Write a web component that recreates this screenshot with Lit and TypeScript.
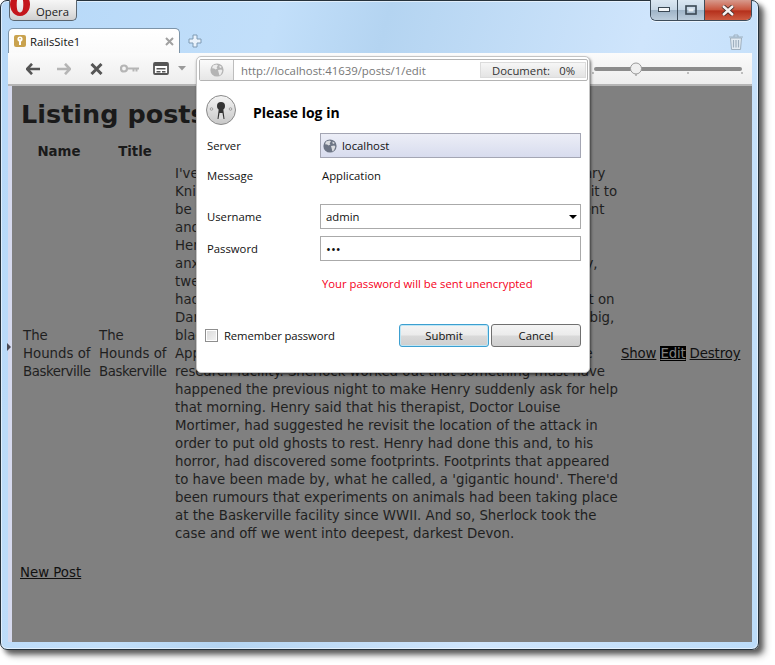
import { LitElement, html, css } from "lit";
import { customElement } from "lit/decorators.js";

const lines = [
  "I've had an odd day. A man named Henry came to see us, Henry",
  "Knight, who had seen something terrible and actually wanted it to",
  "be the one who should explain it all. He was an ordinary, decent",
  "and polite young man, although clearly very worried indeed.",
  "Henry had come all the way from Devon to see us in London",
  "anxious and so afraid of what he had seen on that moor, sadly,",
  "twenty years ago, something that had left him very shaken.",
  "had been having painful dreams since his father was killed out on",
  "Dartmoor, when he was a boy, he had seen a creature; huge, big,",
  "black, with red eyes and that had killed his father before him.",
  "Apparently the hound came from Baskerville, a secret defence",
  "research facility. Sherlock worked out that something must have",
  "happened the previous night to make Henry suddenly ask for help",
  "that morning. Henry said that his therapist, Doctor Louise",
  "Mortimer, had suggested he revisit the location of the attack in",
  "order to put old ghosts to rest. Henry had done this and, to his",
  "horror, had discovered some footprints. Footprints that appeared",
  "to have been made by, what he called, a 'gigantic hound'. There'd",
  "been rumours that experiments on animals had been taking place",
  "at the Baskerville facility since WWII. And so, Sherlock took the",
  "case and off we went into deepest, darkest Devon.",
];

const globe = (size: number, fill: string) => html`<svg width=${size} height=${size} viewBox="0 0 14 14">
  <circle cx="7" cy="7" r="6.6" fill=${fill}></circle>
  <path d="M3 2.6 6.5 1.4 8 2.6 6.6 4.2 7.4 5.6 5.4 6.6 4.2 5.4 2 5.2ZM8 7l3.4-.6 1 1.4-1.4 3.4-1.6 1.2-.8-3.2ZM9.6 2.4l2 1.4-.6 1.2-1.6-.8Z" fill="#fff" opacity=".75"></path>
</svg>`;

@customElement("app-root")
export class AppRoot extends LitElement {
  static styles = css`
    :host { display: block; width: 775px; height: 665px; background: #fff; overflow: hidden; font-family: "Open Sans", "Noto Sans", sans-serif; }
    .window { position: relative; box-sizing: border-box; width: 759px; height: 650px; border: 1px solid #26323c; border-radius: 7px; padding: 0 6px 7px 7px; display: flex; flex-direction: column;
      background: linear-gradient(105deg, #b6d8f8 0%, #c2dffa 30%, #b4d4f1 42%, #cfe5fc 70%, #bcdcf9 100%);
      box-shadow: 4px 4px 5px rgba(0,0,0,.55), 7px 7px 6px rgba(0,0,0,.2), inset 0 0 0 1px rgba(255,255,255,.55); }
    .title { height: 27px; display: flex; justify-content: space-between; align-items: flex-start; flex: none; }
    .opera { box-sizing: border-box; margin: -1px 0 0 1px; width: 68px; height: 21px; border: 1px solid #5b6670; border-top: 0; border-radius: 0 0 5px 5px; display: flex; align-items: center; gap: 6px; overflow: hidden; font-size: 11.3px; color: #1a1a1a;
      background: linear-gradient(#f6f6f6 0%, #e6e6e6 50%, #cfcfcf 100%); }
    .opera span { padding-top: 2px; }
    .opera svg { flex: none; align-self: flex-start; margin-top: -3px; }
    .controls { display: flex; height: 20px; margin: -1px 0 0 0; border: 1px solid #3d4c5a; border-top: 0; border-radius: 0 0 6px 6px; overflow: hidden; box-shadow: 0 1px 0 rgba(255,255,255,.6); }
    .ctl { width: 26px; display: flex; align-items: center; justify-content: center; background: linear-gradient(#dbe7f2 0%, #c7d7e6 48%, #9fb4c7 52%, #bccddc 100%); border-right: 1px solid #3d4c5a; }
    .ctl.wide { width: 46px; border-right: 0; background: linear-gradient(#d79a8d 0%, #c9563f 48%, #b5301c 55%, #cd5b41 100%); }
    .tabs { height: 25px; flex: none; display: flex; align-items: center; }
    .tab { box-sizing: border-box; width: 172px; height: 25px; border: 1px solid #7d94a8; border-bottom: 0; border-radius: 5px 5px 0 0; background: linear-gradient(#fff, #fafafa); display: flex; align-items: center; padding: 0 5px 0 5px; font-size: 11.3px; color: #111; gap: 4px; }
    .tab span { flex: 1; }
    .plus { margin-left: 8px; display: flex; }
    .trash { margin-left: auto; margin-right: 8px; display: flex; margin-top: 2px; }
    .toolbar { height: 33px; box-sizing: border-box; flex: none; border-bottom: 2px solid #b5b5b5; background: linear-gradient(#fbfbfb, #ededed); display: flex; align-items: center; padding-left: 18px; }
    .toolbar svg { flex: none; display: block; }
    .fwd { margin-left: 17px; }
    .stop { margin-left: 19px; }
    .key { margin-left: 17px; }
    .panel { margin-left: 14px; }
    .drop { margin-left: 9px; }
    .pagewrap { flex: 1; display: flex; min-height: 0; }
    .strip { width: 4px; background: #d6daee; position: relative; flex: none; }
    .strip i { position: absolute; left: -1px; top: 257px; border-left: 4px solid #4a4a55; border-top: 4px solid transparent; border-bottom: 4px solid transparent; }
    .page { flex: 1; background: #808080; font: 13.33px/18px "DejaVu Sans", Verdana, sans-serif; color: #1f1f1f; padding: 13px 0 0 8px; overflow: hidden; }
    h1 { margin: 0 0 0 1px; font: bold 25.5px/30px "DejaVu Sans", Verdana, sans-serif; color: #1a1a1a; }
    .table { display: grid; grid-template-columns: 76px 76px 446px auto; margin: 14px 0 0 3px; align-items: center; }
    .th { font-weight: bold; text-align: center; line-height: 18px; height: 22px; color: #1a1a1a; padding-right: 4px; }
    .tight { letter-spacing: -0.45px; }
    .td .l { white-space: nowrap; height: 18px; }
    .actions { letter-spacing: -0.15px; }
    .actions a { color: #111; text-decoration: underline; margin-right: 4px; }
    .actions a.focus { background: #000; color: #808080; }
    .new { display: inline-block; margin-top: 21px; color: #111; text-decoration: underline; }
    .dialog { position: absolute; left: 195px; top: 55px; width: 394px; height: 317px; box-sizing: border-box; background: #fff; border: 1px solid #c4c4c4; border-radius: 5px; box-shadow: 1px 2px 3px rgba(0,0,0,.55); padding: 2px; color: #111; font-size: 11.3px; }
    .addr { box-sizing: border-box; height: 22px; width: 389px; border: 1px solid #b4b4b4; border-radius: 2px; display: flex; align-items: center; }
    .addr .g { box-sizing: border-box; width: 34px; height: 20px; flex: none; display: flex; align-items: center; justify-content: center; background: linear-gradient(#fbfbfb, #e6e6e6); border-right: 1px solid #bdbdbd; }
    .addr .url { flex: 1; padding-left: 7px; color: #777; font-size: 11.4px; }
    .addr .doc { box-sizing: border-box; margin-right: 1px; width: 106px; height: 16px; display: flex; justify-content: space-between; align-items: center; padding: 0 10px 0 11px; background: linear-gradient(#f6f6f6, #e4e4e4); border: 1px solid #dcdcdc; color: #333; font-size: 11.3px; }
    .head { display: flex; align-items: center; margin: 13px 0 0 7px; gap: 17px; height: 32px; font-weight: bold; font-size: 14px; color: #000; }
    .head span { padding-top: 4px; }
    .form { display: grid; grid-template-columns: 113px 261px; margin: 7px 0 0 8px; align-items: center; }
    .form .lab { height: 25px; line-height: 25px; }
    .field { box-sizing: border-box; height: 25px; border: 1px solid #aaa; background: #fff; display: flex; align-items: center; padding-left: 5px; }
    .server { background: linear-gradient(#eceef7, #d8dcee); border-color: #a4a6b4; padding-left: 2px; gap: 5px; }
    .plain { padding-left: 2px; height: 25px; line-height: 25px; }
    .caret { margin-left: auto; margin-right: 3px; border-top: 4px solid #000; border-left: 4px solid transparent; border-right: 4px solid transparent; }
    .dots { font-size: 13px; }
    .gap1 { margin-top: 5px; }
    .gap2 { margin-top: 16px; }
    .gap3 { margin-top: 7px; }
    .warn { grid-column: 2; color: #f5001a; padding-left: 2px; margin-top: 14px; line-height: 18px; }
    .foot { display: flex; align-items: center; margin: 31px 0 0 6px; width: 376px; height: 23px; }
    .foot span { letter-spacing: -0.1px; }
    .check { box-sizing: border-box; width: 13px; height: 13px; border: 1px solid #8e8e8e; background: linear-gradient(135deg, #d9d9d9, #f4f4f4); box-shadow: inset 0 0 0 1px #fff; margin-right: 6px; }
    .btn { box-sizing: border-box; width: 90px; height: 23px; border: 1px solid #707070; border-radius: 3px; text-align: center; line-height: 21px; background: linear-gradient(#f4f4f4 0%, #ebebeb 48%, #d9d9d9 52%, #cfcfcf 100%); color: #111; }
    .btn.sub { margin-left: auto; margin-right: 2px; border-color: #3c9fd0; box-shadow: inset 0 0 0 1px #bfe6f5; }
    .slider { margin-left: auto; margin-right: 8px; }
  `;

  render() {
    return html`
      <div class="window">
        <div class="title">
          <div class="opera">
            <svg width="20" height="19" viewBox="0 0 20 19"><path d="M10 -4a10 11.5 0 1 0 .01 0Zm0 3.500c2.500 0 3.300 3.600 3.300 8s-.8 8-3.300 8-3.300-3.600-3.300-8 .8-8 3.300-8Z" fill-rule="evenodd" fill="#c4161c"></path></svg>
            <span>Opera</span>
          </div>
          <div class="controls">
            <div class="ctl"><svg width="12" height="6"><rect x=".5" y=".5" width="11" height="4" fill="#f4f6f8" stroke="#3a4753"></rect></svg></div>
            <div class="ctl"><svg width="12" height="10"><rect x="1" y="1" width="10" height="8" fill="none" stroke="#3a4753" stroke-width="1.6"></rect><rect x="3.5" y="3.5" width="5" height="3" fill="#e8eef3"></rect></svg></div>
            <div class="ctl wide"><svg width="16" height="11" viewBox="0 0 16 11"><path d="M3 1l10 9M13 1 3 10" stroke="#3d2a28" stroke-width="4.2"></path><path d="M3 1l10 9M13 1 3 10" stroke="#f6f1f0" stroke-width="2.4"></path></svg></div>
          </div>
        </div>
        <div class="tabs">
          <div class="tab">
            <svg width="12" height="12" viewBox="0 0 12 12"><rect width="12" height="12" rx="2" fill="#c9a24e"></rect><circle cx="6" cy="4" r="2.6" fill="#fff"></circle><rect x="5" y="5" width="2" height="5" fill="#fff"></rect><rect x="5.3" y="3" width="1.4" height="1.4" fill="#c9a24e"></rect></svg>
            <span>RailsSite1</span>
            <svg width="9" height="9" viewBox="0 0 9 9"><path d="M1 1l7 7M8 1 1 8" stroke="#a0a0a0" stroke-width="2"></path></svg>
          </div>
          <div class="plus"><svg width="14" height="14" viewBox="0 0 14 14"><path d="M5 1h4v4h4v4H9v4H5V9H1V5h4Z" fill="#e9f2fb" stroke="#7f9ab3"></path></svg></div>
          <div class="trash"><svg width="16" height="16" viewBox="0 0 16 16"><path d="M1 3h14M6 3V1h4v2" fill="none" stroke="#9fb0bf"></path><path d="M2.5 4h11l-1 11.500h-9Z" fill="#e2ebf3" stroke="#9fb0bf"></path><path d="M5.500 6v7.500M8 6v7.500M10.500 6v7.500" stroke="#9fb0bf" stroke-width="1.2"></path></svg></div>
        </div>
        <div class="toolbar">
          <svg width="14" height="12" viewBox="0 0 14 12"><path d="M6 .8 1 6l5 5.200M1.600 6H14" fill="none" stroke="#555" stroke-width="2.6"></path></svg>
          <svg class="fwd" width="14" height="12" viewBox="0 0 14 12"><path d="M8 .8 13 6l-5 5.200M12.400 6H0" fill="none" stroke="#b5b5b5" stroke-width="2.6"></path></svg>
          <svg class="stop" width="13" height="12" viewBox="0 0 13 12"><path d="M1.500 1 11.500 11M11.500 1 1.500 11" stroke="#555" stroke-width="3"></path></svg>
          <svg class="key" width="19" height="9" viewBox="0 0 19 9"><circle cx="4" cy="4.500" r="3" fill="none" stroke="#b5b5b5" stroke-width="2.200"></circle><path d="M7 3.500h12v2h-1.500v2h-2v-2h-1v2h-2v-2H7Z" fill="#b5b5b5"></path></svg>
          <svg class="panel" width="16" height="13" viewBox="0 0 16 13"><rect x="1" y="1" width="14" height="11" rx="1" fill="#fff" stroke="#555" stroke-width="1.800"></rect><rect x="1" y="1" width="14" height="3" fill="#555"></rect><path d="M3.500 6h9v1.500h-9ZM3.500 9h4v1.500h-4ZM9 9h3.500v1.500H9Z" fill="#555"></path></svg>
          <svg class="drop" width="8" height="5"><path d="M0 0h8L4 4.500Z" fill="#999"></path></svg>
          <svg class="slider" width="152" height="16" viewBox="0 0 152 16">
            <rect x="2" y="6" width="148" height="4" rx="2" fill="#8c8c8c"></rect>
            <path d="M1 11v2M44 11v4M96 11v2M150 11v2" stroke="#888"></path>
            <circle cx="44" cy="7.500" r="5.500" fill="#efefef" stroke="#9a9a9a"></circle>
          </svg>
        </div>
        <div class="pagewrap">
          <div class="strip"><i></i></div>
          <div class="page">
            <h1>Listing posts</h1>
            <div class="table">
              <div class="th">Name</div><div class="th">Title</div><div></div><div></div>
              <div class="td">The<br />Hounds of<br /><span class="tight">Baskerville</span></div>
              <div class="td">The<br />Hounds of<br /><span class="tight">Baskerville</span></div>
              <div class="td">${lines.map((l) => html`<div class="l">${l}</div>`)}</div>
              <div class="actions"><a>Show</a><a class="focus">Edit</a><a>Destroy</a></div>
            </div>
            <a class="new">New Post</a>
          </div>
        </div>
        <div class="dialog">
          <div class="addr">
            <div class="g">${globe(14, "#b4b4b4")}</div>
            <div class="url">http://localhost:41639/posts/1/edit</div>
            <div class="doc"><span>Document:</span><span>0%</span></div>
          </div>
          <div class="head">
            <svg width="30" height="30" viewBox="0 0 30 30">
              <defs><linearGradient id="kh" x1="0" y1="0" x2="0" y2="1"><stop offset="0" stop-color="#f4f4f4"></stop><stop offset="1" stop-color="#c8c8c8"></stop></linearGradient></defs>
              <circle cx="15" cy="15" r="14.500" fill="url(#kh)" stroke="#8a8a8a"></circle>
              <circle cx="15" cy="11" r="4" fill="#333"></circle>
              <path d="M13 12h4l1.500 12h-7Z" fill="#333"></path>
              <path d="M13.500 18h3l1 6h-5Z" fill="#ddd"></path>
              <circle cx="5.500" cy="14" r="1.300" fill="none" stroke="#888" stroke-width=".7"></circle>
              <circle cx="24.500" cy="14" r="1.300" fill="none" stroke="#888" stroke-width=".7"></circle>
            </svg>
            <span>Please log in</span>
          </div>
          <div class="form">
            <div class="lab">Server</div>
            <div class="field server">${globe(14, "#6d7585")}<span>localhost</span></div>
            <div class="lab gap1">Message</div>
            <div class="plain gap1">Application</div>
            <div class="lab gap2">Username</div>
            <div class="field gap2">admin<i class="caret"></i></div>
            <div class="lab gap3">Password</div>
            <div class="field gap3 dots">•••</div>
            <div class="warn">Your password will be sent unencrypted</div>
          </div>
          <div class="foot">
            <div class="check"></div>
            <span>Remember password</span>
            <div class="btn sub">Submit</div>
            <div class="btn">Cancel</div>
          </div>
        </div>
      </div>
    `;
  }
}
